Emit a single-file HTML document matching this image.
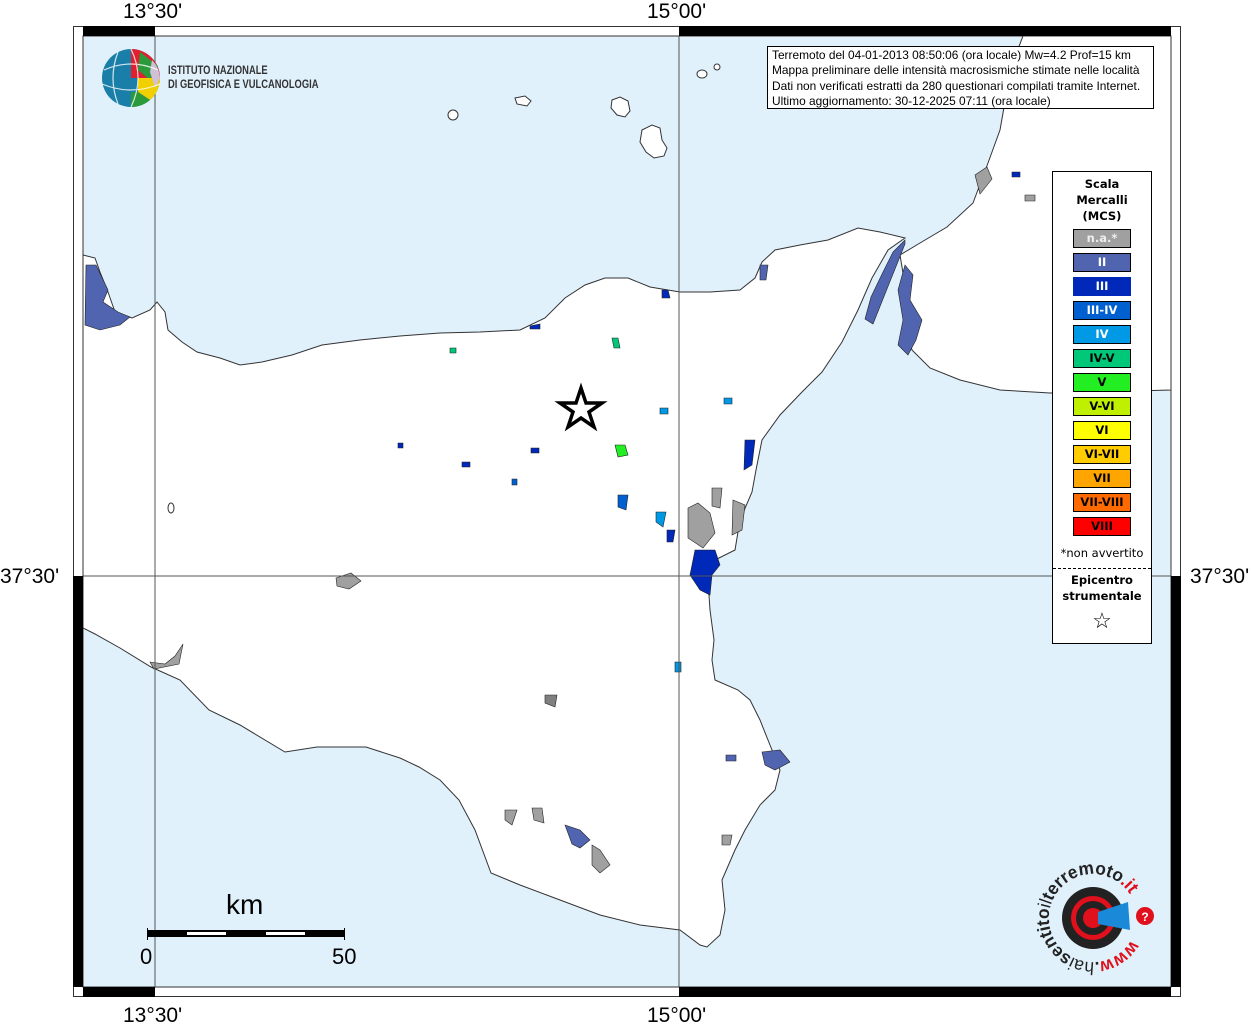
<!DOCTYPE html>
<html><head><meta charset="utf-8"><style>
html,body{margin:0;padding:0;background:#fff}
body{width:1254px;height:1024px;position:relative;overflow:hidden;font-family:"Liberation Sans",sans-serif}
.lbl{position:absolute;font-size:21px;color:#000;line-height:1}
</style></head><body>
<svg width="1254" height="1024" style="position:absolute;left:0;top:0" xmlns="http://www.w3.org/2000/svg">
<rect x="0" y="0" width="1254" height="1024" fill="#fff"/>
<rect x="83" y="36" width="1088" height="951" fill="#e0f1fc"/>
<!-- Calabria -->
<polygon fill="#fff" stroke="#333" stroke-width="1" points="1023,36 1171,36 1171,390 1100,392 1050,393 1000,390 960,380 930,368 912,350 903,315 905,285 900,255 920,243 947,227 973,203 988,163 1000,130 1003,113 1010,70"/>
<!-- Sicily -->
<polygon fill="#fff" stroke="#333" stroke-width="1" points="83,255 95,258 100,272 108,292 115,312 132,318 150,310 157,302 165,312 168,330 182,342 197,352 220,358 240,365 262,362 292,355 322,345 360,340 400,336 440,333 480,332 520,330 545,318 565,298 585,285 605,278 628,278 650,287 680,292 710,292 740,290 755,278 762,262 775,250 800,245 828,240 858,228 880,232 905,238 888,250 872,278 858,310 842,342 822,372 802,392 780,415 762,440 756,470 752,492 740,520 735,550 715,560 708,580 710,610 714,640 712,660 715,680 738,690 750,700 760,720 770,745 780,770 775,790 760,805 745,830 735,850 722,880 725,910 720,935 707,947 700,945 680,930 640,925 600,915 560,900 520,885 491,873 475,830 459,800 440,780 419,767 400,758 366,747 317,747 285,752 240,725 209,710 180,680 151,667 120,648 95,634 83,628"/>
<!-- islands -->
<path d="M642,130 l10,-5 8,3 2,12 5,8 -3,8 -10,2 -8,-6 -6,-10z" fill="#fff" stroke="#333"/>
<path d="M612,100 l8,-3 8,4 2,10 -5,6 -8,-2 -6,-7z" fill="#fff" stroke="#333"/>
<ellipse cx="453" cy="115" rx="5" ry="5" fill="#fff" stroke="#333"/>
<path d="M515,98 l10,-2 6,5 -4,5 -10,-2z" fill="#fff" stroke="#333"/>
<ellipse cx="702" cy="74" rx="5" ry="4" fill="#fff" stroke="#333"/>
<ellipse cx="717" cy="67" rx="3" ry="3" fill="#fff" stroke="#333"/>
<ellipse cx="171" cy="508" rx="3" ry="5" fill="#fff" stroke="#333"/>
<!-- towns -->
<g stroke="#222" stroke-width=".6">
<path d="M86,265 l10,0 12,25 -5,12 15,10 12,5 -10,8 -20,5 -15,-5z" fill="#5064b0"/>
<path d="M905,240 l-12,12 -10,20 -12,25 -6,22 8,5 10,-25 12,-30 10,-25z" fill="#5064b0"/>
<path d="M905,265 l8,10 -3,25 12,20 -6,20 -8,15 -10,-10 5,-25 -5,-30z" fill="#5064b0"/>
<path d="M695,550 l20,0 5,15 -8,10 -2,20 -10,-5 -10,-15z" fill="#0029b9"/>
<path d="M688,508 l10,-5 12,10 5,20 -12,15 -15,-10z" fill="#a0a0a0"/>
<path d="M712,488 l10,0 -2,20 -8,-2z" fill="#a0a0a0"/>
<path d="M733,500 l12,5 -3,25 -10,5z" fill="#a0a0a0"/>
<path d="M745,440 l10,0 -3,25 -8,5z" fill="#0029b9"/>
<path d="M565,825 l15,5 10,10 -10,8 -8,-4z" fill="#5064b0"/>
<path d="M592,845 l8,5 10,15 -10,8 -8,-8z" fill="#a0a0a0"/>
<path d="M505,810 l12,0 -5,15 -7,-5z" fill="#a0a0a0"/>
<path d="M532,808 l10,0 2,15 -10,-3z" fill="#a0a0a0"/>
<path d="M762,752 l18,-2 10,12 -15,8 -10,-5z" fill="#5064b0"/>
<path d="M336,578 l15,-5 10,8 -12,8 -12,-3z" fill="#a0a0a0"/>
<path d="M150,662 l15,2 10,-8 8,-12 -4,20 -25,5z" fill="#a0a0a0"/>
<path d="M545,695 l12,0 -2,12 -10,-4z" fill="#808080"/>
<path d="M615,445 l10,0 3,10 -10,2z" fill="#22ee22"/>
<path d="M618,495 l10,0 -2,15 -8,-3z" fill="#0060d0"/>
<path d="M656,512 l10,0 -3,15 -7,-5z" fill="#0099e6"/>
<path d="M667,530 l8,0 -2,12 -6,0z" fill="#0029b9"/>
<path d="M660,408 l8,0 0,6 -8,0z" fill="#0099e6"/>
<path d="M724,398 l8,0 0,6 -8,0z" fill="#0099e6"/>
<path d="M675,662 l6,0 0,10 -6,0z" fill="#0099e6"/>
<path d="M726,755 l10,0 0,6 -10,0z" fill="#5064b0"/>
<path d="M612,338 l6,0 2,10 -6,0z" fill="#00c878"/>
<path d="M450,348 l6,0 0,5 -6,0z" fill="#00c878"/>
<path d="M530,326 l10,-2 0,5 -10,0z" fill="#0029b9"/>
<path d="M662,290 l6,0 2,8 -8,0z" fill="#0029b9"/>
<path d="M462,462 l8,0 0,5 -8,0z" fill="#0029b9"/>
<path d="M531,448 l8,0 0,5 -8,0z" fill="#0029b9"/>
<path d="M398,443 l5,0 0,5 -5,0z" fill="#0029b9"/>
<path d="M512,479 l5,0 0,6 -5,0z" fill="#0060d0"/>
<path d="M1012,172 l8,0 0,5 -8,0z" fill="#0029b9"/>
<path d="M1025,195 l10,0 0,6 -10,0z" fill="#a0a0a0"/>
<path d="M975,175 l12,-8 5,12 -12,15z" fill="#a0a0a0"/>
<path d="M722,835 l10,0 -2,10 -8,0z" fill="#a0a0a0"/>
<path d="M760,265 l8,0 -2,15 -6,0z" fill="#5064b0"/>
</g>
<!-- grid -->
<line x1="155" y1="36" x2="155" y2="987" stroke="#555" stroke-width="1"/>
<line x1="679" y1="36" x2="679" y2="987" stroke="#555" stroke-width="1"/>
<line x1="83" y1="576" x2="1171" y2="576" stroke="#555" stroke-width="1"/>
<!-- frame -->
<rect x="73.5" y="26.5" width="1107" height="970" fill="none" stroke="#333"/>
<rect x="83" y="36" width="1088" height="951" fill="none" stroke="#333"/>
<rect x="83" y="26" width="72" height="10" fill="#000"/>
<rect x="679" y="26" width="492" height="10" fill="#000"/>
<rect x="83" y="987" width="72" height="10" fill="#000"/>
<rect x="679" y="987" width="492" height="10" fill="#000"/>
<rect x="73" y="576" width="10" height="411" fill="#000"/>
<rect x="1171" y="576" width="10" height="411" fill="#000"/>
<!-- epicentre star -->
<polygon points="581,388 586,403 602,403 589,412 594,427 581,418 568,427 573,412 560,403 576,403" fill="#fff" stroke="#000" stroke-width="3.5"/>
<!-- scale bar -->
<rect x="147" y="930" width="198" height="7" fill="#000"/>
<rect x="187" y="932" width="39" height="3" fill="#fff"/>
<rect x="266" y="932" width="39" height="3" fill="#fff"/>
<line x1="147.5" y1="928" x2="147.5" y2="940" stroke="#000"/>
<line x1="344.5" y1="928" x2="344.5" y2="940" stroke="#000"/>
<!-- INGV logo -->
<circle cx="131" cy="78" r="29" fill="#1a7fa8"/>
<path d="M131,49 A29,29 0 0,1 160,78 L131,78Z" fill="#e02030"/>
<path d="M140,52 L158,66 L150,80 L138,70Z" fill="#2a9a3a"/>
<path d="M138,78 L160,78 A29,29 0 0,1 150,100 L138,92Z" fill="#f0d000"/>
<path d="M138,92 L150,100 A29,29 0 0,1 131,107 L131,92Z" fill="#2a9a3a"/>
<path d="M152,60 A29,29 0 0,1 160,78 L155,88 L150,72Z" fill="#d0c0d8"/>
<path d="M104,70 Q131,58 158,70 M102,84 Q131,96 160,84 M118,52 Q108,78 118,104 M131,49 Q145,78 131,107" fill="none" stroke="#fff" stroke-width="1.2" opacity=".8"/>
<!-- haisentito logo -->
<circle cx="1093" cy="918" r="31" fill="#222"/>
<circle cx="1093" cy="918" r="22" fill="#e0101c"/>
<circle cx="1093" cy="918" r="17" fill="#222"/>
<circle cx="1093" cy="918" r="10" fill="#e0101c"/>
<polygon points="1098,912 1128,902 1130,930 1098,924" fill="#1a8ad8"/>
<circle cx="1145" cy="916" r="9" fill="#e0101c"/>
<text x="1145" y="921" font-size="12" font-weight="bold" fill="#fff" text-anchor="middle" font-family="Liberation Sans">?</text>
<path id="arc" d="M1131,940 A44,44 0 1,1 1129,893" fill="none"/>
<text font-family="Liberation Sans" font-size="18" fill="#222"><textPath href="#arc" textLength="228" lengthAdjust="spacingAndGlyphs"><tspan fill="#e0101c" font-weight="bold">www</tspan><tspan font-weight="bold">.</tspan>hai<tspan font-weight="bold">sentito</tspan>il<tspan font-weight="bold">terremoto</tspan><tspan fill="#e0101c" font-weight="bold">.it</tspan></textPath></text>
</svg>

<div class="lbl" style="left:123px;top:1px">13°30'</div>
<div class="lbl" style="left:647px;top:1px">15°00'</div>
<div class="lbl" style="left:123px;top:1005px">13°30'</div>
<div class="lbl" style="left:647px;top:1005px">15°00'</div>
<div class="lbl" style="left:0px;top:566px">37°30'</div>
<div class="lbl" style="left:1190px;top:566px">37°30'</div>
<div class="lbl" style="left:226px;top:891px;font-size:28px">km</div>
<div class="lbl" style="left:140px;top:946px;font-size:22px">0</div>
<div class="lbl" style="left:332px;top:946px;font-size:22px">50</div>

<div style="position:absolute;left:168px;top:63px;font-family:'Liberation Sans Narrow','Liberation Sans',sans-serif;font-size:12px;font-weight:bold;line-height:14px;color:#333;transform:scaleX(.78);transform-origin:left;white-space:nowrap">ISTITUTO NAZIONALE<br>DI GEOFISICA E VULCANOLOGIA</div>

<div style="position:absolute;left:767px;top:46px;width:387px;height:63px;border:1px solid #000;background:#fff;font-size:11.9px;line-height:15.3px;padding:1px 0 0 4px;box-sizing:border-box;white-space:nowrap;overflow:hidden">Terremoto del 04-01-2013 08:50:06 (ora locale) Mw=4.2 Prof=15 km<br>Mappa preliminare delle intensità macrosismiche stimate nelle località<br>Dati non verificati estratti da 280 questionari compilati tramite Internet.<br>Ultimo aggiornamento: 30-12-2025 07:11 (ora locale)</div>

<div style="position:absolute;left:1052px;top:171px;width:100px;height:473px;border:1px solid #000;background:#fff;box-sizing:border-box;font-family:'DejaVu Sans',sans-serif">
<div style="text-align:center;font-weight:bold;font-size:11.5px;line-height:16px;margin-top:4px">Scala<br>Mercalli<br>(MCS)</div>
</div>
<div style="position:absolute;left:1052px;top:546px;width:100px;text-align:center;font-family:'DejaVu Sans',sans-serif;font-size:11.5px">*non avvertito</div>
<div style="position:absolute;left:1053px;top:568px;width:98px;border-top:1px dashed #000"></div>
<div style="position:absolute;left:1052px;top:572px;width:100px;text-align:center;font-family:'DejaVu Sans',sans-serif;font-size:11.5px;font-weight:bold;line-height:16px">Epicentro<br>strumentale</div>
<div style="position:absolute;left:1052px;top:608px;width:100px;text-align:center;font-size:22px;line-height:26px">☆</div>

<div style="position:absolute;left:1073px;top:229px;font-family:'DejaVu Sans',sans-serif;font-weight:bold;font-size:11.5px">
<div style="width:56px;height:17px;border:1px solid #000;background:#a0a0a0;color:#eee;text-align:center;line-height:17px;margin-bottom:5px">n.a.*</div>
<div style="width:56px;height:17px;border:1px solid #000;background:#5064b0;color:#fff;text-align:center;line-height:17px;margin-bottom:5px">II</div>
<div style="width:56px;height:17px;border:1px solid #0029b9;background:#0029b9;color:#fff;text-align:center;line-height:17px;margin-bottom:5px">III</div>
<div style="width:56px;height:17px;border:1px solid #000;background:#0060d0;color:#fff;text-align:center;line-height:17px;margin-bottom:5px">III-IV</div>
<div style="width:56px;height:17px;border:1px solid #000;background:#0099e6;color:#fff;text-align:center;line-height:17px;margin-bottom:5px">IV</div>
<div style="width:56px;height:17px;border:1px solid #000;background:#00c878;color:#000;text-align:center;line-height:17px;margin-bottom:5px">IV-V</div>
<div style="width:56px;height:17px;border:1px solid #000;background:#22ee22;color:#000;text-align:center;line-height:17px;margin-bottom:5px">V</div>
<div style="width:56px;height:17px;border:1px solid #000;background:#bff000;color:#000;text-align:center;line-height:17px;margin-bottom:5px">V-VI</div>
<div style="width:56px;height:17px;border:1px solid #000;background:#ffff00;color:#000;text-align:center;line-height:17px;margin-bottom:5px">VI</div>
<div style="width:56px;height:17px;border:1px solid #000;background:#ffcc00;color:#000;text-align:center;line-height:17px;margin-bottom:5px">VI-VII</div>
<div style="width:56px;height:17px;border:1px solid #000;background:#ffa500;color:#000;text-align:center;line-height:17px;margin-bottom:5px">VII</div>
<div style="width:56px;height:17px;border:1px solid #000;background:#ff6a00;color:#000;text-align:center;line-height:17px;margin-bottom:5px">VII-VIII</div>
<div style="width:56px;height:17px;border:1px solid #000;background:#ff0000;color:#000;text-align:center;line-height:17px;margin-bottom:5px">VIII</div>
</div>
</body></html>
